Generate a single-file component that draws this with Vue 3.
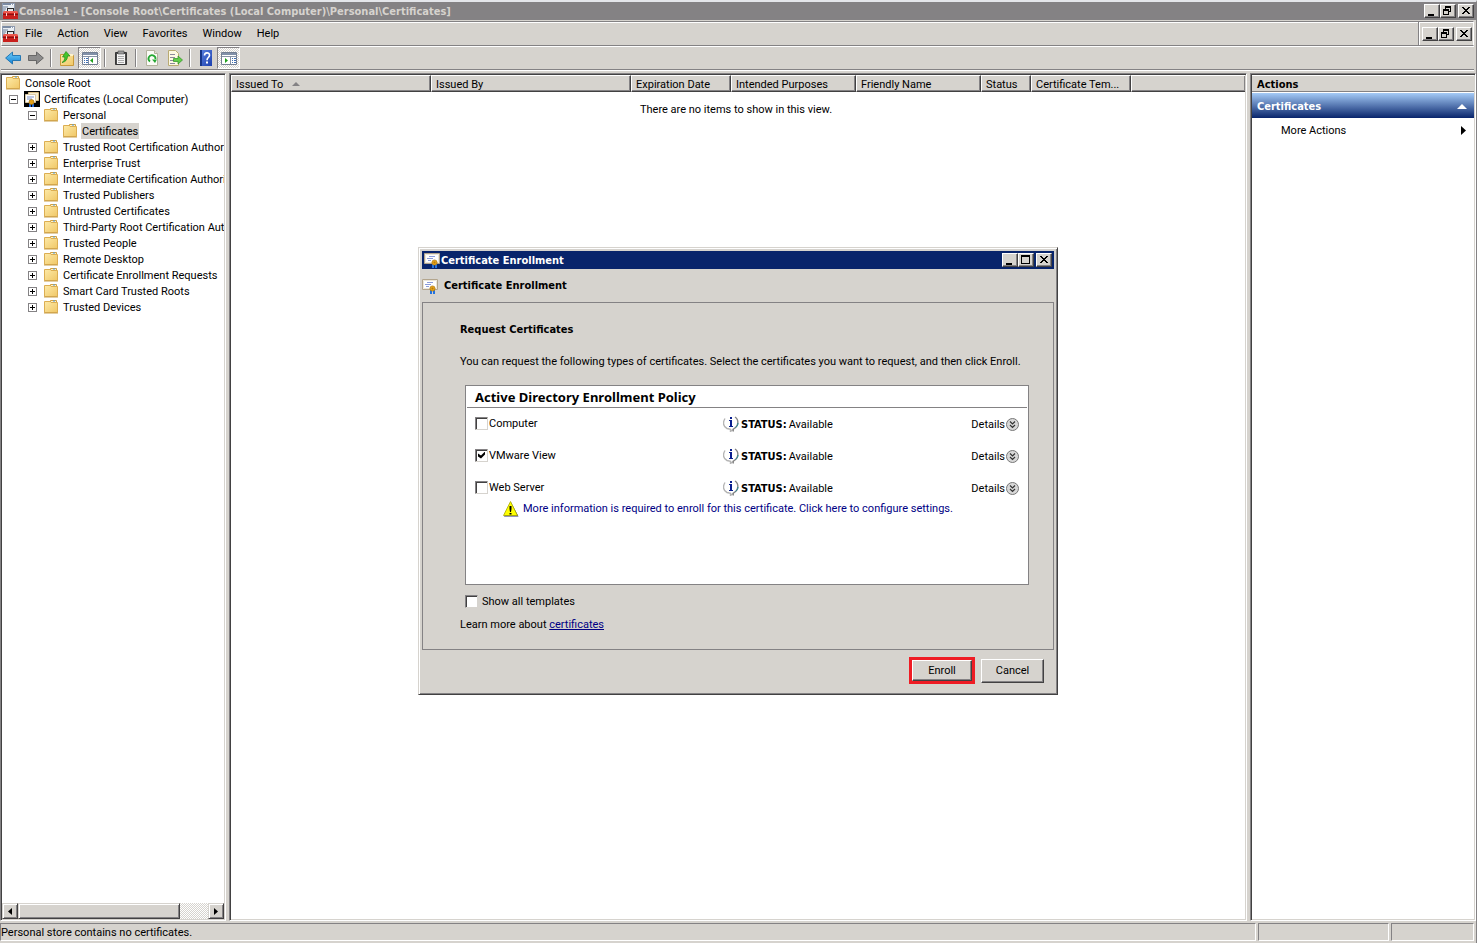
<template>
  <div class="window">
    <header class="title-bar">
      <svg class="icon" viewBox="0 0 16 16"><use href="#i-console" /></svg>
      <h1>Console1 - [Console Root\Certificates (Local Computer)\Personal\Certificates]</h1>
      <div class="controls">
        <button v-for="c in mainControls" :key="c" class="ctl" :class="c" :aria-label="c">
          <svg viewBox="0 0 12 10"><use :href="'#c-' + c" /></svg>
        </button>
      </div>
    </header>

    <div class="menu-row">
      <nav class="menu-bar">
        <svg class="icon" viewBox="0 0 16 16"><use href="#i-console" /></svg>
        <button v-for="m in menus" :key="m" class="menu">{{ m }}</button>
      </nav>
      <div class="controls mdi">
        <button v-for="c in mainControls" :key="c" class="ctl" :class="c" :aria-label="c">
          <svg viewBox="0 0 12 10"><use :href="'#c-' + c" /></svg>
        </button>
      </div>
    </div>

    <div class="toolbar">
      <template v-for="(t, i) in tools" :key="i">
        <span v-if="t.icon === 'sep'" class="sep"></span>
        <button v-else class="tool" :class="{ pressed: t.pressed }" :aria-label="t.label">
          <svg class="icon" viewBox="0 0 16 16"><use :href="'#i-' + t.icon" /></svg>
        </button>
      </template>
    </div>

    <main class="panes">
      <aside class="pane tree-pane">
        <ul class="tree">
          <li v-for="n in nodes" :key="n.id" :class="'level-' + n.level">
            <button v-if="n.sign" class="expander" :class="n.sign" :aria-label="n.sign"></button>
            <svg class="icon" viewBox="0 0 16 16"><use :href="n.level === 1 ? '#i-store' : '#i-folder'" /></svg>
            <span class="node" :class="{ selected: n.selected }">{{ n.text }}</span>
          </li>
        </ul>
        <div class="scrollbar">
          <button class="scroll-btn" aria-label="Scroll left">
            <svg viewBox="0 0 4 7"><path d="M4 0v7L0 3.5z" /></svg>
          </button>
          <div class="thumb"></div>
          <div class="track"></div>
          <button class="scroll-btn" aria-label="Scroll right">
            <svg viewBox="0 0 4 7"><path d="M0 0v7l4-3.5z" /></svg>
          </button>
        </div>
      </aside>

      <section class="pane list-pane">
        <table>
          <colgroup>
            <col v-for="c in columns" :key="c.name" :class="c.size">
            <col>
          </colgroup>
          <thead>
            <tr>
              <th v-for="c in columns" :key="c.name">
                {{ c.name }}
                <svg v-if="c.sorted" class="sort" viewBox="0 0 8 4"><path d="M4 0l4 4H0z" /></svg>
              </th>
              <th class="filler"></th>
            </tr>
          </thead>
          <tbody>
            <tr><td :colspan="columns.length + 1">There are no items to show in this view.</td></tr>
          </tbody>
        </table>
      </section>

      <aside class="pane actions-pane">
        <h2>Actions</h2>
        <button class="group">
          Certificates
          <svg class="up" viewBox="0 0 10 5"><path d="M5 0l5 5H0z" /></svg>
        </button>
        <button class="action">
          More Actions
          <svg class="right" viewBox="0 0 5 9"><path d="M0 0v9l5-4.5z" /></svg>
        </button>
      </aside>
    </main>

    <footer class="status-bar">
      <div class="message">Personal store contains no certificates.</div>
      <div class="cell wide"></div>
      <div class="cell"></div>
    </footer>

    <div class="overlay">
      <section class="dialog" role="dialog" aria-label="Certificate Enrollment">
        <header class="dialog-title">
          <svg class="icon" viewBox="0 0 16 16"><use href="#i-cert" /></svg>
          <h2>Certificate Enrollment</h2>
          <div class="controls">
            <button v-for="c in dialogControls" :key="c" class="ctl" :class="c" :aria-label="c">
              <svg viewBox="0 0 12 10"><use :href="'#c-' + c" /></svg>
            </button>
          </div>
        </header>
        <div class="dialog-head">
          <svg class="icon" viewBox="0 0 16 16"><use href="#i-cert" /></svg>
          <h3>Certificate Enrollment</h3>
        </div>
        <div class="dialog-body">
          <h4>Request Certificates</h4>
          <p class="intro">You can request the following types of certificates. Select the certificates you want to request, and then click Enroll.</p>
          <div class="policy">
            <h5>Active Directory Enrollment Policy</h5>
            <div v-for="t in templates" :key="t.name" class="template">
              <label><input v-model="t.checked" type="checkbox">{{ t.name }}</label>
              <span class="status">
                <svg class="icon" viewBox="0 0 16 16"><use href="#i-info" /></svg>
                <strong>STATUS:</strong> Available
              </span>
              <button class="details">
                Details
                <svg viewBox="0 0 13 13"><use href="#i-chevrons" /></svg>
              </button>
            </div>
            <a href="#" class="warning" @click.prevent>
              <svg class="icon" viewBox="0 0 16 16"><use href="#i-warning" /></svg>
              More information is required to enroll for this certificate. Click here to configure settings.
            </a>
          </div>
          <label class="show-all"><input v-model="showAll" type="checkbox">Show all templates</label>
          <p class="learn">Learn more about <a href="#" @click.prevent>certificates</a></p>
        </div>
        <div class="dialog-buttons">
          <span class="highlight"><button class="push">Enroll</button></span>
          <button class="push cancel">Cancel</button>
        </div>
      </section>
    </div>

    <svg class="defs" aria-hidden="true">
      <defs>
        <linearGradient id="g-folder" x1="0" y1="0" x2="1" y2="1">
          <stop offset="0" stop-color="#fdeaa8" />
          <stop offset="1" stop-color="#f0c766" />
        </linearGradient>
        <linearGradient id="g-blue" x1="0" y1="0" x2="0" y2="1">
          <stop offset="0" stop-color="#6fcdf8" />
          <stop offset="1" stop-color="#1583d6" />
        </linearGradient>
        <linearGradient id="g-help" x1="0" y1="0" x2="1" y2="1">
          <stop offset="0" stop-color="#5b83e0" />
          <stop offset="1" stop-color="#1c3fae" />
        </linearGradient>

        <symbol id="c-minimize" viewBox="0 0 12 10"><path d="M2 8h6v2H2z" /></symbol>
        <symbol id="c-maximize" viewBox="0 0 12 10"><path d="M1 0h9v9H1zM2 2v6h7V2z" fill-rule="evenodd" /></symbol>
        <symbol id="c-restore" viewBox="0 0 12 10">
          <path d="M3 0h6v6H7V5h1V2H4v1H3zM1 3h6v6H1zM2 5v3h4V5z" fill-rule="evenodd" />
        </symbol>
        <symbol id="c-close" viewBox="0 0 12 10">
          <path d="M2 1h2v1h1v1h2V2h1V1h2v1H9v1H8v1H7v1h1v1h1v1h1v1H8V7H7V6H5v1H4v1H2V7h1V6h1V5h1V4H4V3H3V2H2z" />
        </symbol>

        <symbol id="i-console" viewBox="0 0 16 16">
          <path d="M0 0h13v12H0z" fill="#8e9bb0" />
          <path d="M1 2h11v9H1z" fill="#e8edf2" />
          <path d="M1 1h8M1 4h5M1 6h3M1 8h2" stroke="#6b7c96" />
          <path d="M9 1h1v1H9zM11 1h1v1h-1z" fill="#fff" />
          <path d="M5 8V5h7v3h-1V6H6v2z" fill="#2a2a2a" />
          <path d="M7 6h3v1H7z" fill="#ddd" />
          <path d="M2 8h13l1 2v6H1v-6z" fill="#c9201c" />
          <path d="M2 8h13l1 2H1z" fill="#ea5a4e" />
          <path d="M1 11.500h15" stroke="#8d1010" />
          <path d="M4 10h1v3H4zM12 10h1v3h-1z" fill="#f6d5d0" />
        </symbol>
        <symbol id="i-folder" viewBox="0 0 16 16">
          <path d="M7.500 3V1.500h6V3" fill="#fff3c9" stroke="#d3a13f" />
          <path d="M10 2h2" stroke="#4f9be0" />
          <path d="M1.500 2.500H7l1 1h6.500v10h-13z" fill="url(#g-folder)" stroke="#dcae52" />
          <path d="M1 14h14" stroke="#c99f4a" />
        </symbol>
        <symbol id="i-store" viewBox="0 0 16 16">
          <path d="M0 0h16v16H0z" />
          <path d="M4.500 1.500h10v8h-10z" fill="#f5ecd0" stroke="#d8bd84" />
          <path d="M1.500 3.500h10v8h-10z" fill="#fff" stroke="#d9c9a5" />
          <path d="M3 6h7M3 8h5" stroke="#7d91c4" />
          <path d="M5 12h2v4H5zM8 12h2v4H8z" fill="#2369d8" />
          <circle cx="7.500" cy="11" r="2.500" fill="#e3a118" stroke="#9b6806" stroke-width=".6" />
        </symbol>
        <symbol id="i-cert" viewBox="0 0 16 16">
          <path d="M.5 1.500h15v10H.5z" fill="#fff" stroke="#b3a58d" />
          <path d="M1.500 2.500h13v8h-13z" fill="none" stroke="#ece7db" />
          <path d="M5 4.500h6M3 6.500h6M4 8.500h3" stroke="#8c9cd8" />
          <path d="M8 12h2v4H8zM11 12h2v4h-2z" fill="#2272e0" />
          <circle cx="10.500" cy="10.500" r="2.600" fill="#e5a31c" stroke="#a36d08" stroke-width=".6" />
          <circle cx="10.500" cy="10.500" r="1" fill="#b97a0a" />
        </symbol>
        <symbol id="i-back" viewBox="0 0 16 16">
          <path d="M.6 8l6.900-6v3.500h8v5h-8V14z" fill="url(#g-blue)" stroke="#1b6fae" stroke-width=".9" />
        </symbol>
        <symbol id="i-forward" viewBox="0 0 16 16">
          <path d="M15.400 8l-6.900-6v3.500h-8v5h8V14z" fill="#8c8c8c" stroke="#5f5f5f" stroke-width=".9" />
        </symbol>
        <symbol id="i-up" viewBox="0 0 16 16">
          <path d="M1.500 4.500H5l1 1h8.500v10h-13z" fill="url(#g-folder)" stroke="#c99a3c" />
          <path d="M10 4h4v2h-4z" fill="#fff3c9" />
          <path d="M3 12.500c2-1 2.800-3 2.800-5.500H3.500L7 1.500 11 6H8.500c0 3.500-2 6-5.500 6.500z" fill="#43c62c" stroke="#218a17" stroke-width=".7" />
        </symbol>
        <symbol id="i-tree" viewBox="0 0 16 16">
          <path d="M.5 2.500h15v12H.5z" fill="#fff" stroke="#737f92" />
          <path d="M1 3h14v2H1z" fill="#8190a8" />
          <path d="M1 6.500h14M6.500 7v7" stroke="#8793a6" />
          <path d="M2 8.500h1M2 10.500h1M2 12.500h1M4 8.500h2M4 10.500h2M4 12.500h2" stroke="#3e6db2" />
          <path d="M11 8v5l-3-2.500z" fill="#1fa01b" />
        </symbol>
        <symbol id="i-panel" viewBox="0 0 16 16">
          <path d="M.5 2.500h15v12H.5z" fill="#fff" stroke="#737f92" />
          <path d="M1 3h14v2H1z" fill="#8190a8" />
          <path d="M1 6.500h14M9.500 7v7" stroke="#8793a6" />
          <path d="M11 8.500h1M11 10.500h1M11 12.500h1M13 8.500h2M13 10.500h2M13 12.500h2" stroke="#3e6db2" />
          <path d="M4 8v5l3-2.500z" fill="#1fa01b" />
        </symbol>
        <symbol id="i-clipboard" viewBox="0 0 16 16">
          <path d="M2.500 2.500h11v12h-11z" fill="#4a4a4a" stroke="#383838" />
          <path d="M4 4h8v10H4z" fill="#f4f4f4" />
          <path d="M5 1h6v3H5z" fill="#9a9a9a" stroke="#4a4a4a" stroke-width=".6" />
          <path d="M5 6.500h6M5 8.500h6M5 10.500h6M5 12.500h6" stroke="#aaa" />
        </symbol>
        <symbol id="i-refresh" viewBox="0 0 16 16">
          <path d="M2.500.5h8l3 3v12h-11z" fill="#fbfbf6" stroke="#b4b29e" />
          <path d="M10.500.5v3h3" fill="#e5e3d4" stroke="#b4b29e" />
          <path d="M6 11.500A3.500 3.500 0 1 1 11.500 9" fill="none" stroke="#24a832" stroke-width="1.800" />
          <path d="M8 9.500h5L11 13z" fill="#24a832" />
        </symbol>
        <symbol id="i-export" viewBox="0 0 16 16">
          <path d="M1.500.5h7l3 3v12h-10z" fill="#fdf9e3" stroke="#b9aa72" />
          <path d="M3 4.500h5M3 7.500h5M3 10.500h4M3 13.500h5" stroke="#8d8a9b" />
          <path d="M6.500 8.500H11V6l4.500 4-4.500 4v-2.500H6.500z" fill="#62cd4a" stroke="#2d9222" stroke-width=".7" />
        </symbol>
        <symbol id="i-help" viewBox="0 0 16 16">
          <path d="M2 0h12v16H2z" fill="url(#g-help)" />
          <path d="M2 0h2v16H2z" fill="#173588" />
          <path d="M6.500 5.500C6.500 2 11.500 2 11.500 5.200c0 2.300-2.500 2.300-2.500 5" fill="none" stroke="#fff" stroke-width="1.600" />
          <path d="M8 11.500h2v2H8z" fill="#fff" />
        </symbol>
        <symbol id="i-info" viewBox="0 0 16 16">
          <path d="M2 2.500C-.2 6-.2 10.500 4 12.500l3.500.8V15.500l3-2.500" fill="none" stroke="#b5b5b5" stroke-width="1.400" />
          <path d="M12 1c4 2.500 4 9-1.500 12l-.5 2.500" fill="none" stroke="#858585" stroke-width="1.400" />
          <path d="M15 7c0 2-1 3.500-2.500 4.500" fill="none" stroke="#1b8a96" />
          <path d="M7 1h2v2H7zM6 4h3v6h1v1H6v-1h1V5H6z" fill="#0a1f8f" />
        </symbol>
        <symbol id="i-warning" viewBox="0 0 16 16">
          <path d="M8 1.500L15.500 15.500H1z" fill="#2b2b7a" />
          <path d="M7.500.5L14.500 14.500H.5z" fill="#ff0" stroke="#a8a800" stroke-width=".8" />
          <path d="M6.500 5h2v3l-.5 3h-1l-.5-3zM6.500 12h2v1.500h-2z" />
        </symbol>
        <symbol id="i-chevrons" viewBox="0 0 13 13">
          <circle cx="6.500" cy="6.500" r="6" fill="#d8d8d8" stroke="#777" />
          <path d="M4 3.500L6.500 6 9 3.500M4 7l2.500 2.500L9 7" fill="none" stroke="#333" stroke-width="1.200" />
        </symbol>
      </defs>
    </svg>
  </div>
</template>

<script setup>
import { ref } from 'vue'

const mainControls = ['minimize', 'restore', 'close']
const dialogControls = ['minimize', 'maximize', 'close']
const menus = ['File', 'Action', 'View', 'Favorites', 'Window', 'Help']

const tools = [
  { icon: 'back', label: 'Back' },
  { icon: 'forward', label: 'Forward' },
  { icon: 'sep' },
  { icon: 'up', label: 'Up one level' },
  { icon: 'tree', label: 'Console tree', pressed: true },
  { icon: 'sep' },
  { icon: 'clipboard', label: 'Paste' },
  { icon: 'sep' },
  { icon: 'refresh', label: 'Refresh' },
  { icon: 'export', label: 'Export list' },
  { icon: 'sep' },
  { icon: 'help', label: 'Help' },
  { icon: 'panel', label: 'Action pane', pressed: true }
]

const stores = [
  'Trusted Root Certification Authorities',
  'Enterprise Trust',
  'Intermediate Certification Authorities',
  'Trusted Publishers',
  'Untrusted Certificates',
  'Third-Party Root Certification Authorities',
  'Trusted People',
  'Remote Desktop',
  'Certificate Enrollment Requests',
  'Smart Card Trusted Roots',
  'Trusted Devices'
]

const nodes = [
  { id: 'root', level: 0, text: 'Console Root' },
  { id: 'computer', level: 1, text: 'Certificates (Local Computer)', sign: 'minus' },
  { id: 'personal', level: 2, text: 'Personal', sign: 'minus' },
  { id: 'certs', level: 3, text: 'Certificates', selected: true },
  ...stores.map((text) => ({ id: text, level: 2, text, sign: 'plus' }))
]

const columns = [
  { name: 'Issued To', size: 'w-200', sorted: true },
  { name: 'Issued By', size: 'w-200' },
  { name: 'Expiration Date', size: 'w-100' },
  { name: 'Intended Purposes', size: 'w-125' },
  { name: 'Friendly Name', size: 'w-125' },
  { name: 'Status', size: 'w-50' },
  { name: 'Certificate Tem...', size: 'w-100' }
]

const templates = ref([
  { name: 'Computer', checked: false },
  { name: 'VMware View', checked: true },
  { name: 'Web Server', checked: false }
])
const showAll = ref(false)
</script>

<style>
body {
  margin: 0;
  background: #d6d3ce;
}
</style>

<style scoped>
.window {
  --face: #d6d3ce;
  --shadow: #848284;
  --dark: #424142;
  display: flex;
  flex-direction: column;
  height: 100vh;
  box-sizing: border-box;
  border-top: 2px solid #e4e6ea;
  border-right: 1px solid var(--shadow);
  background: var(--face);
  color: #000;
  font-family: Tahoma, Roboto, sans-serif;
  font-size: 11px;
  line-height: 17px;
  overflow: hidden;
}
h1, h2, h3, h4, h5, p, ul {
  margin: 0;
  padding: 0;
}
h1, h2, h3, h4 {
  font-size: 11px;
  font-weight: bold;
}
button {
  margin: 0;
  padding: 0;
  border: 0;
  background: none;
  color: inherit;
  font: inherit;
}
h1, h2, h3, h4, strong, .group {
  padding-top: 1px;
  font-family: Tahoma, "DejaVu Sans Condensed", "DejaVu Sans", sans-serif;
  line-height: 16px;
}
.icon {
  flex: none;
  width: 16px;
  height: 16px;
}
.defs {
  position: absolute;
  width: 0;
  height: 0;
}

/* title bars */
.title-bar {
  display: flex;
  align-items: center;
  height: 18px;
  padding: 0 2px;
  background: var(--shadow);
  color: var(--face);
}
.title-bar h1,
.dialog-title h2 {
  flex: 1;
  padding-left: 1px;
  white-space: nowrap;
}
.controls {
  display: flex;
  align-items: center;
}
.ctl {
  width: 16px;
  height: 14px;
  padding: 1px;
  background: var(--face);
  color: #000;
  border: 1px solid;
  border-color: #fff var(--dark) var(--dark) #fff;
  box-shadow: inset -1px -1px 0 var(--shadow);
}
.ctl.close { margin-left: 2px; }
.ctl svg {
  display: block;
  width: 12px;
  height: 10px;
}

/* menu and tools */
.menu-row {
  display: flex;
  height: 23px;
  margin: 1px 2px 0 1px;
  border: 1px solid;
  border-color: var(--shadow) #fff var(--shadow) #fff;
  box-shadow: inset 0 1px 0 #fff, 0 1px 0 #fff;
}
.menu-bar {
  display: flex;
  align-items: center;
  flex: 1;
  gap: 1px;
}
.menu { padding: 0 7px; }
.menu-bar .icon { margin-right: -1px; }
.mdi {
  padding: 0 1px 0 3px;
  border-left: 1px solid var(--shadow);
  box-shadow: inset 1px 0 0 #fff;
}
.toolbar {
  display: flex;
  align-items: center;
  height: 22px;
  margin: 1px 2px 0 1px;
  border-bottom: 1px solid var(--shadow);
  box-shadow: 0 1px 0 #fff;
}
.tool {
  display: flex;
  align-items: center;
  justify-content: center;
  width: 23px;
  height: 22px;
}
.tool.pressed {
  box-sizing: border-box;
  border: 1px solid;
  border-color: var(--shadow) #fff #fff var(--shadow);
  background: repeating-conic-gradient(#fff 0 25%, #d6d3ce 0 50%) 0 0 / 2px 2px;
}
.sep {
  width: 1px;
  height: 18px;
  margin: 0 3px;
  border-left: 1px solid var(--shadow);
  background: #fff;
}

/* panes */
.panes {
  display: flex;
  flex: 1;
  gap: 3px;
  min-height: 0;
  padding-top: 3px;
}
.pane {
  box-sizing: border-box;
  border: 1px solid;
  border-color: var(--shadow) #fff #fff var(--shadow);
  background: #fff;
  box-shadow: inset 1px 1px 0 var(--dark), inset -1px -1px 0 var(--face);
  padding: 1px;
  overflow: hidden;
}
.tree-pane {
  display: flex;
  flex-direction: column;
  width: 226px;
}
.list-pane { flex: 1; }
.actions-pane { width: 226px; }

.tree {
  flex: 1;
  list-style: none;
  overflow: hidden;
}
.tree li {
  display: flex;
  align-items: center;
  height: 16px;
  white-space: nowrap;
}
.level-0 { padding-left: 3px; }
.level-1 { padding-left: 3px; }
.level-2 { padding-left: 22px; }
.level-3 { padding-left: 60px; }
.expander {
  flex: none;
  width: 9px;
  height: 9px;
  margin: 0 6px 0 4px;
  border: 1px solid var(--shadow);
  background: linear-gradient(#000, #000) center / 5px 1px no-repeat;
}
.expander.plus {
  background:
    linear-gradient(#000, #000) center / 5px 1px no-repeat,
    linear-gradient(#000, #000) center / 1px 5px no-repeat;
}
.node {
  height: 16px;
  margin-left: 3px;
  padding: 0 1px;
}
.node.selected { background: var(--face); }

.scrollbar {
  display: flex;
  height: 16px;
}
.scroll-btn,
.thumb {
  box-sizing: border-box;
  background: var(--face);
  border: 1px solid;
  border-color: var(--face) var(--dark) var(--dark) var(--face);
  box-shadow: inset 1px 1px 0 #fff, inset -1px -1px 0 var(--shadow);
}
.scroll-btn {
  display: flex;
  align-items: center;
  justify-content: center;
  width: 16px;
}
.scroll-btn svg {
  width: 4px;
  height: 7px;
}
.thumb { flex: 162; }
.track {
  flex: 28;
  background: repeating-conic-gradient(#fff 0 25%, #d6d3ce 0 50%) 0 0 / 2px 2px;
}

table {
  width: 100%;
  table-layout: fixed;
  border-collapse: separate;
  border-spacing: 0;
}
.w-200 { width: 200px; }
.w-125 { width: 125px; }
.w-100 { width: 100px; }
.w-50 { width: 50px; }
th {
  height: 13px;
  padding: 2px 4px 0;
  border: 1px solid;
  border-color: #fff var(--dark) var(--dark) #fff;
  background: var(--face);
  box-shadow: inset -1px -1px 0 var(--shadow);
  font-weight: normal;
  line-height: 13px;
  text-align: left;
  white-space: nowrap;
}
th.filler { border-right: 0; }
.sort {
  width: 8px;
  height: 4px;
  margin: 0 0 2px 6px;
  fill: var(--shadow);
}
td {
  padding: 9px 8px 9px 4px;
  text-align: center;
}

.actions-pane h2 {
  height: 14px;
  padding-left: 5px;
  border-top: 1px solid #fff;
  border-bottom: 1px solid var(--shadow);
  background: var(--face);
}
.group,
.action {
  display: flex;
  align-items: center;
  justify-content: space-between;
  width: 100%;
  height: 25px;
}
.group {
  margin-top: 1px;
  padding: 2px 7px 0 5px;
  background: linear-gradient(#a5cbf7, #08246b);
  color: #fff;
  font-weight: bold;
}
.action {
  padding: 0 8px 0 29px;
  line-height: 16px;
}
.up {
  width: 10px;
  height: 5px;
  fill: #fff;
}
.right {
  width: 5px;
  height: 9px;
}

/* status bar */
.status-bar {
  display: flex;
  gap: 2px;
  padding: 2px 2px 2px 0;
}
.message,
.cell {
  height: 16px;
  border: 1px solid;
  border-color: var(--shadow) #fff #fff var(--shadow);
}
.message { flex: 1; }
.cell { width: 81px; }
.cell.wide { width: 129px; }

/* dialog */
.overlay {
  position: fixed;
  inset: 0 1px 1px 0;
  display: grid;
  place-items: center;
}
.dialog {
  box-sizing: border-box;
  width: 640px;
  padding: 3px;
  border: 1px solid;
  border-color: var(--face) var(--dark) var(--dark) var(--face);
  background: var(--face);
  box-shadow: inset 1px 1px 0 #fff, inset -1px -1px 0 var(--shadow);
}
.dialog-title {
  display: flex;
  align-items: center;
  height: 18px;
  padding: 0 2px;
  background: #08246b;
  color: #fff;
}
.dialog-head {
  display: flex;
  align-items: center;
  gap: 6px;
  height: 33px;
}
.dialog-body {
  height: 308px;
  padding: 18px 24px 20px 37px;
  border: 1px solid var(--shadow);
}
.intro {
  margin-top: 15px;
  white-space: nowrap;
}
.policy {
  box-sizing: border-box;
  height: 200px;
  margin: 15px 0 0 5px;
  border: 1px solid var(--shadow);
  background: #fff;
}
h5 {
  height: 20px;
  margin: 0 1px;
  padding: 1px 0 0 8px;
  border-bottom: 1px solid var(--shadow);
  font-family: Tahoma, "Noto Sans", sans-serif;
  font-size: 13px;
  line-height: 20px;
}
.template {
  display: grid;
  grid-template-columns: 248px 1fr auto;
  align-items: center;
  height: 32px;
  padding: 0 9px;
}
label,
.status,
.details,
.warning {
  display: flex;
  align-items: center;
}
.template label { margin-bottom: 2px; }
.status { gap: 2px; }
.details svg {
  width: 13px;
  height: 13px;
  margin-left: 1px;
}
.warning {
  gap: 4px;
  margin: -4px 0 0 37px;
  color: #000084;
  text-decoration: none;
  white-space: nowrap;
}
input[type="checkbox"] {
  appearance: none;
  box-sizing: border-box;
  flex: none;
  width: 13px;
  height: 13px;
  margin: 0 1px 0 0;
  border: 1px solid;
  border-color: var(--shadow) var(--face) var(--face) var(--shadow);
  background: #fff;
  box-shadow: inset 1px 1px 0 var(--dark);
}
input[type="checkbox"]:checked::after {
  content: "";
  display: block;
  width: 7px;
  height: 7px;
  margin: 2px;
  background: #000;
  clip-path: polygon(0 2px, 3px 4px, 7px 0, 7px 3px, 3px 7px, 0 5px);
}
.show-all {
  gap: 3px;
  margin: 8px 0 0 5px;
}
.learn { margin-top: 6px; }
.learn a { color: #000084; }
.dialog-buttons {
  display: flex;
  align-items: center;
  justify-content: flex-end;
  gap: 6px;
  padding: 7px 10px;
}
.highlight {
  display: flex;
  border: 3px solid #ef1c24;
}
.push {
  width: 60px;
  height: 21px;
  border: 1px solid;
  border-color: #fff var(--dark) var(--dark) #fff;
  background: var(--face);
  box-shadow: inset -1px -1px 0 var(--shadow);
  line-height: 16px;
}
.push.cancel {
  width: 63px;
  height: 24px;
}
</style>
